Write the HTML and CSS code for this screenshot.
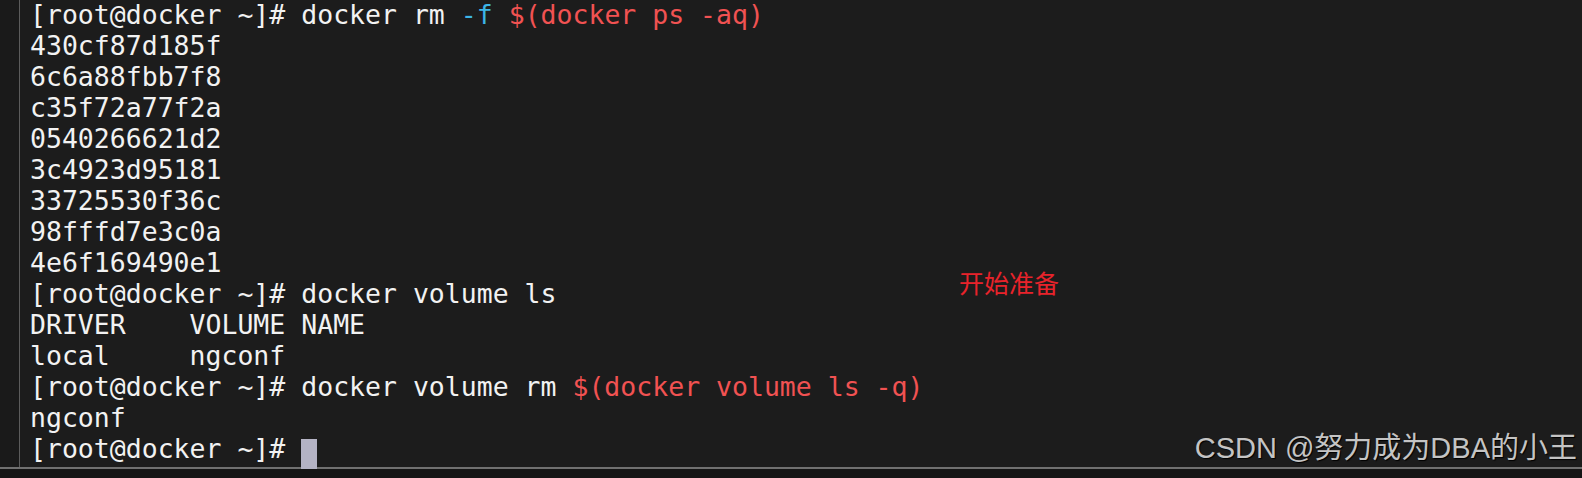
FILE: index.html
```html
<!DOCTYPE html>
<html lang="zh-CN">
<head>
<meta charset="utf-8">
<title>terminal</title>
<link rel="stylesheet" href="styles.css">
</head>
<body>
<div class="screen">
  <div class="gutter"></div>
  <div class="terminal">
    <div class="line">[root@docker ~]# docker rm <span class="opt">-f</span> <span class="sub">$(docker ps -aq)</span></div>
    <div class="line">430cf87d185f</div>
    <div class="line">6c6a88fbb7f8</div>
    <div class="line">c35f72a77f2a</div>
    <div class="line">0540266621d2</div>
    <div class="line">3c4923d95181</div>
    <div class="line">33725530f36c</div>
    <div class="line">98fffd7e3c0a</div>
    <div class="line">4e6f169490e1</div>
    <div class="line">[root@docker ~]# docker volume ls</div>
    <div class="line">DRIVER    VOLUME NAME</div>
    <div class="line">local     ngconf</div>
    <div class="line">[root@docker ~]# docker volume rm <span class="sub">$(docker volume ls -q)</span></div>
    <div class="line">ngconf</div>
    <div class="line">[root@docker ~]# <span class="cursor"> </span></div>
    <div class="note">开始准备</div>
    <div class="watermark">CSDN @努力成为DBA的小王</div>
  </div>
</div>
<div class="footer"></div>
</body>
</html>
```
FILE: styles.css
```css
html, body {
  margin: 0;
  padding: 0;
  background: #1c1c1c;
  width: 1582px;
  height: 478px;
  overflow: hidden;
}
.screen {
  display: flex;
  height: 467px;
  border-bottom: 2px solid #707070;
}
.gutter {
  width: 19px;
  flex: none;
  background: #1a1a1a;
  border-right: 1px solid #5c5c5c;
}
.terminal {
  position: relative;
  flex: 1;
  padding-left: 10px;
  margin-top: -1px;
  font-family: "DejaVu Sans Mono", monospace;
  font-size: 26.5px;
  line-height: 31px;
  color: #f2f2f2;
}
.line {
  white-space: pre;
  height: 31px;
}
.opt {
  color: #3db5e6;
}
.sub {
  color: #f15252;
}
.cursor {
  display: inline-block;
  width: 16px;
  height: 30px;
  vertical-align: -6px;
  background: #b4b3c4;
}
.note {
  position: absolute;
  left: 939px;
  top: 266px;
  font-family: "Noto Sans CJK SC", sans-serif;
  font-size: 25px;
  line-height: 34px;
  color: #e8232b;
}
.watermark {
  position: absolute;
  right: 5px;
  top: 432px;
  font-family: "Liberation Sans", "Noto Sans CJK SC", sans-serif;
  font-size: 29px;
  line-height: 34px;
  color: #c4c4c4;
  text-shadow: 1px 1px 1px #000;
  white-space: nowrap;
}
.footer {
  height: 9px;
  background: #151515;
}
```
